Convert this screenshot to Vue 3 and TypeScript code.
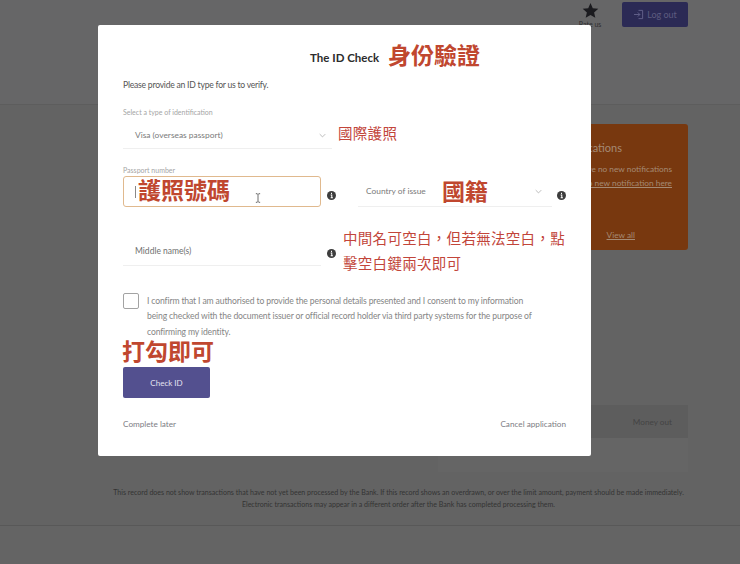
<script setup lang="ts">
const consentLines: string[] = [
  'I confirm that I am authorised to provide the personal details presented and I consent to my information',
  'being checked with the document issuer or official record holder via third party systems for the purpose of',
  'confirming my identity.'
]
</script>

<template>
  <div class="page">
    <header class="topbar">
      <div class="fav">
        <svg class="star" viewBox="0 0 24 24" width="17" height="17"><path d="M12 1.500l3.200 7.200 7.800.8-5.900 5.200 1.700 7.700L12 18.400l-6.800 4 1.700-7.700L1 9.500l7.800-.8z" fill="#1b1b1f"/></svg>
        <span class="fav-label">Rate us</span>
      </div>
      <div class="logout">
        <svg viewBox="0 0 16 16" width="11" height="11" fill="none" stroke="#62618a" stroke-width="1.400"><path d="M8 2h6v12H8M1.500 8h8.500M7 5l3 3-3 3"/></svg>
        <span>Log out</span>
      </div>
    </header>
    <main class="body">
      <aside class="notice">
        <div class="notice-title">Notifications</div>
        <p class="notice-text">You have no new notifications<br><u>Set up new notification here</u></p>
        <u class="notice-link">View all</u>
      </aside>
      <div class="table-head"><span>Money out</span></div>
      <div class="table-row"></div>
      <p class="foot">This record does not show transactions that have not yet been processed by the Bank. If this record shows an overdrawn, or over the limit amount, payment should be made immediately.<br>Electronic transactions may appear in a different order after the Bank has completed processing them.</p>
    </main>
    <footer class="bottom"></footer>

    <section class="modal">
      <div class="title-row">
        <h1>The ID Check</h1>
        <span class="mark big raised">身份驗證</span>
      </div>
      <p class="lead">Please provide an ID type for us to verify.</p>

      <label class="small-label first">Select a type of identification</label>
      <div class="row">
        <div class="select wide">
          <span>Visa (overseas passport)</span>
          <svg class="chev" viewBox="0 0 10 6" width="7" height="5"><path d="M1 1l4 4 4-4" fill="none" stroke="#a9a9a9" stroke-width="1.100"/></svg>
        </div>
        <span class="mark note first-note">國際護照</span>
      </div>

      <label class="small-label second">Passport number</label>
      <div class="row passport-row">
        <div class="input-focus">
          <i class="caret"></i>
          <span class="mark big field-mark">護照號碼</span>
          <svg class="ibeam" viewBox="0 0 8 14" width="6" height="10"><path d="M1 1h2l1 1 1-1h2M4 2v10M1 13h2l1-1 1 1h2" fill="none" stroke="#333" stroke-width="1"/></svg>
        </div>
        <svg class="info" viewBox="0 0 16 16" width="9" height="9"><circle cx="8" cy="8" r="8" fill="#3d3d3d"/><path d="M8 3.200v2.200M6.500 7.200H8.500V12M6.500 12h4" stroke="#fff" stroke-width="1.800" fill="none"/></svg>
        <div class="select country">
          <span class="country-text">Country of issue</span>
          <span class="mark big">國籍</span>
          <svg class="chev" viewBox="0 0 10 6" width="7" height="5"><path d="M1 1l4 4 4-4" fill="none" stroke="#a9a9a9" stroke-width="1.100"/></svg>
        </div>
        <svg class="info last-info" viewBox="0 0 16 16" width="9" height="9"><circle cx="8" cy="8" r="8" fill="#3d3d3d"/><path d="M8 3.200v2.200M6.500 7.200H8.500V12M6.500 12h4" stroke="#fff" stroke-width="1.800" fill="none"/></svg>
      </div>

      <div class="row middle-row">
        <div class="middle"><span>Middle name(s)</span></div>
        <svg class="info middle-info" viewBox="0 0 16 16" width="9" height="9"><circle cx="8" cy="8" r="8" fill="#3d3d3d"/><path d="M8 3.200v2.200M6.500 7.200H8.500V12M6.500 12h4" stroke="#fff" stroke-width="1.800" fill="none"/></svg>
        <p class="mark note middle-note">中間名可空白，但若無法空白，點<br>擊空白鍵兩次即可</p>
      </div>

      <div class="consent">
        <span class="box"></span>
        <div class="consent-text">
          <div v-for="line in consentLines" :key="line">{{ line }}</div>
        </div>
      </div>
      <div class="mark big tick">打勾即可</div>
      <button class="check" type="button">Check ID</button>
      <div class="actions">
        <span>Complete later</span>
        <span>Cancel application</span>
      </div>
    </section>
  </div>
</template>

<style scoped>
.page {
  position: relative;
  width: 740px;
  height: 564px;
  overflow: hidden;
  background: #636363;
  font-family: Lato, "Noto Sans", sans-serif;
  display: flex;
  flex-direction: column;
}
.topbar {
  height: 105px;
  box-sizing: border-box;
  flex: none;
  background: #666667;
  border-bottom: 1px solid #5d5d5d;
  display: flex;
  justify-content: flex-end;
  align-items: flex-start;
  padding: 2px 52px 0 0;
  gap: 17px;
}
.fav {
  width: 30px;
  display: flex;
  flex-direction: column;
  align-items: center;
}
.star { margin-bottom: 1px; }
.fav-label { font-size: 7px; color: #2e2e30; white-space: nowrap; }
.logout {
  width: 66px;
  height: 25px;
  background: #2b2a55;
  border-radius: 2px;
  color: #5d5c80;
  font-size: 9px;
  display: flex;
  align-items: center;
  justify-content: center;
  gap: 3px;
}
.body {
  flex: 1;
  display: flex;
  flex-direction: column;
  align-items: flex-end;
  padding: 19px 52px 0 0;
}
.notice {
  width: 250px;
  height: 126px;
  box-sizing: border-box;
  background: #78380f;
  border-radius: 3px;
  color: #a58a74;
  padding-top: 17px;
  display: flex;
  flex-direction: column;
  align-items: flex-end;
  font-size: 8.300px;
}
.notice-title { font-size: 11px; margin-right: 66px; }
.notice-text { margin: 8px 16px 0 0; line-height: 14px; white-space: nowrap; text-align: right; }
.notice-link { margin: 40px 53px 0 0; }
.table-head {
  width: 250px;
  height: 33px;
  margin-top: 155px;
  background: #5d5d5d;
  display: flex;
  justify-content: flex-end;
  align-items: center;
  padding-right: 16px;
  box-sizing: border-box;
  color: #444;
  font-size: 8.200px;
}
.table-row { width: 250px; height: 34px; background: #656565; }
.foot {
  margin: 15px 4px 0 0;
  align-self: flex-end;
  width: 571px;
  text-align: center;
  font-size: 7.050px;
  line-height: 12px;
  color: #333;
  white-space: nowrap;
}
.bottom {
  height: 39px;
  box-sizing: border-box;
  flex: none;
  background: #646464;
  border-top: 1px solid #585858;
}
.modal {
  position: absolute;
  left: 98px;
  top: 25px;
  width: 493px;
  height: 431px;
  box-sizing: border-box;
  background: #fff;
  border-radius: 2px;
  padding: 0 25px;
  color: #6b6b6b;
}
.mark {
  font-family: Lato, "Noto Sans CJK TC", sans-serif;
  color: #c2453a;
}
.big {
  font-size: 23px;
  font-weight: 700;
  color: #c0472f;
  line-height: 1;
  white-space: nowrap;
}
.raised { margin-bottom: 4px; }
.field-mark { margin-bottom: 2px; }
.note { font-size: 14.500px; line-height: 25px; margin: 0; letter-spacing: 0.300px; }
.title-row {
  padding: 19px 0 0 187px;
  display: flex;
  align-items: center;
  gap: 9px;
  height: 27px;
  box-sizing: content-box;
}
h1 {
  margin: 0;
  font-size: 11.500px;
  font-weight: 700;
  color: #2c2c2c;
  white-space: nowrap;
}
.lead { margin: 8px 0 0; font-size: 8.600px; letter-spacing: -0.230px; line-height: 12px; color: #555; }
.small-label { display: block; font-size: 7px; line-height: 10px; color: #a5a5a5; }
.first { margin-top: 16px; }
.second { margin-top: 16px; }
.row { display: flex; align-items: flex-start; }
.select {
  box-sizing: border-box;
  height: 28px;
  border-bottom: 1px solid #efefef;
  display: flex;
  align-items: center;
  font-size: 8.400px;
  color: #7a7a7a;
}
.wide {
  width: 209px;
  flex: none;
  margin-top: 4px;
  padding: 1px 6px 0 12px;
  justify-content: space-between;
}
.first-note { margin: 4px 0 0 6px; }
.passport-row { margin-top: 1px; height: 31px; }
.input-focus {
  position: relative;
  flex: none;
  box-sizing: border-box;
  width: 198px;
  height: 31px;
  border: 1px solid #e0b98e;
  border-radius: 3px;
  padding-left: 11px;
  display: flex;
  align-items: center;
}
.caret { width: 1px; height: 12px; background: #888; margin-right: 2px; }
.ibeam { position: absolute; left: 131px; top: 16px; }
.info { flex: none; margin: 15px 0 0 6px; }
.last-info { margin-left: 5px; }
.country {
  flex: none;
  width: 194px;
  height: 31px;
  margin-left: 22px;
  padding: 0 10px 0 8px;
}
.country-text { width: 76px; white-space: nowrap; }
.country .chev { margin-left: auto; }
.middle-row { height: 59px; position: relative; }
.middle {
  flex: none;
  box-sizing: border-box;
  width: 198px;
  height: 59px;
  padding: 39px 0 0 12px;
  border-bottom: 1px solid #efefef;
  font-size: 8.500px;
  color: #6f6f6f;
}
.middle-info { margin-top: 42px; }
.middle-note { margin: 19px 0 0 7px; white-space: nowrap; }
.consent { display: flex; margin-top: 27px; }
.box {
  flex: none;
  width: 14px;
  height: 14px;
  border: 1px solid #a3a3a3;
  border-radius: 2px;
}
.consent-text {
  margin: 1px 0 0 8px;
  font-size: 8.600px;
  letter-spacing: -0.130px;
  line-height: 15.400px;
  color: #858585;
  white-space: nowrap;
}
.tick { height: 20px; line-height: 22px; margin-left: -1px; }
.check {
  display: block;
  width: 87px;
  height: 31px;
  margin-top: 7px;
  border: 0;
  border-radius: 2px;
  background: #53508f;
  color: #e4e3f0;
  font-family: inherit;
  font-size: 8px;
}
.actions {
  display: flex;
  justify-content: space-between;
  margin-top: 20px;
  font-size: 8.200px;
  line-height: 12px;
  color: #7d7d84;
}
</style>
